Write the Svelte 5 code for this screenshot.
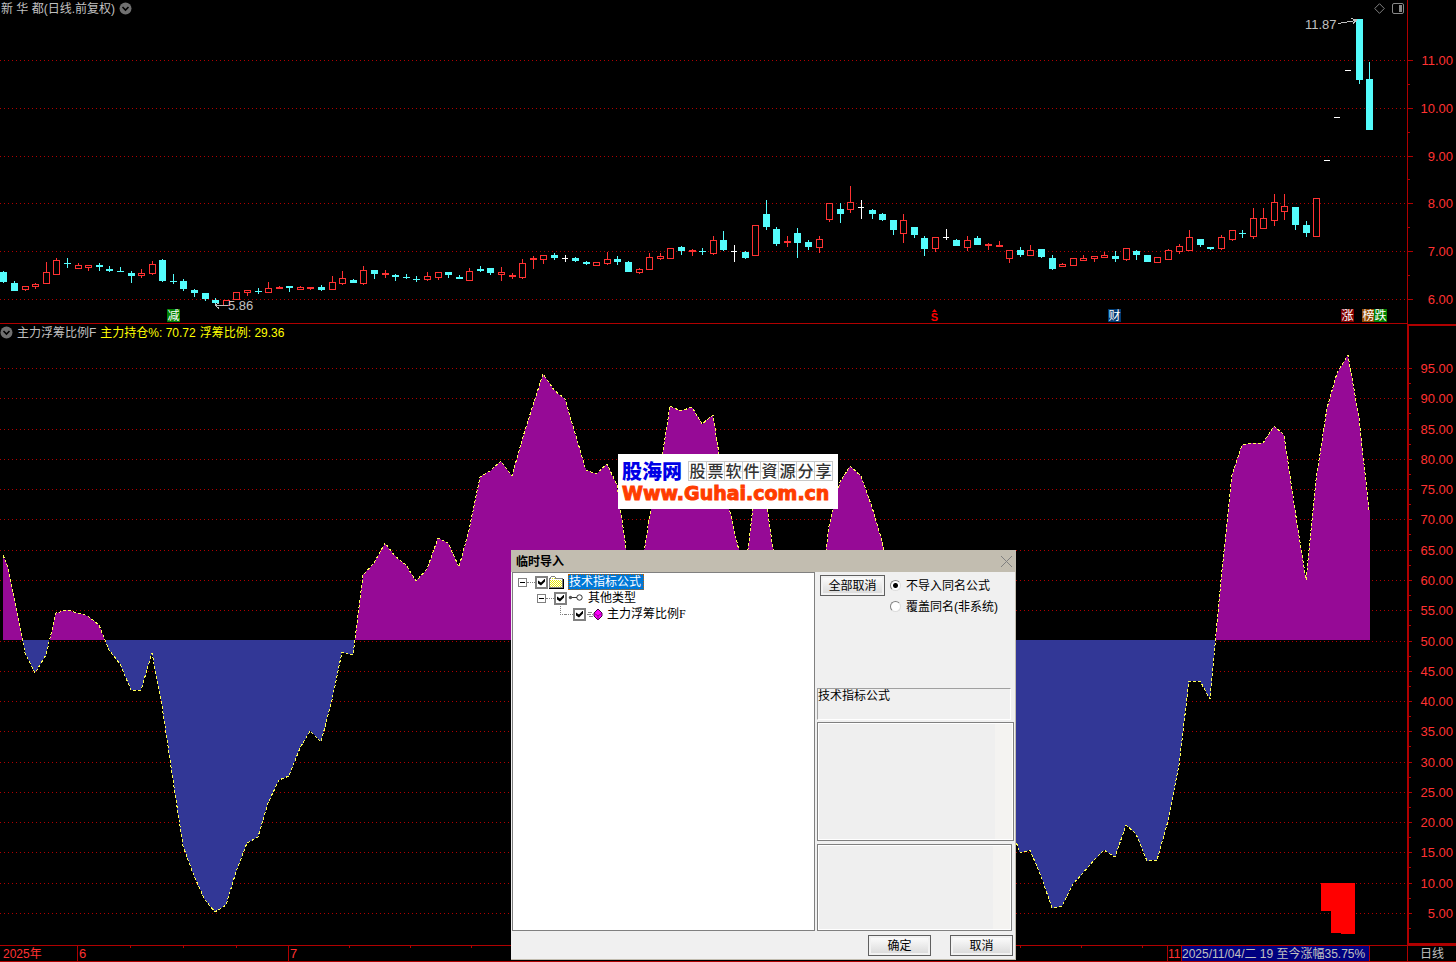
<script>
	// [x, high, top, bottom, low, kind] — u: up, d: down, f: flat
	const candles = [
		[3, 271, 272, 282, 283, 'd'], [14, 281, 283, 291, 291, 'd'], [25, 286, 286, 290, 291, 'u'],
		[35, 283, 284, 287, 289, 'u'], [46, 262, 272, 284, 284, 'u'], [56, 258, 260, 275, 275, 'u'],
		[67, 258, 263, 264, 268, 'd'], [78, 263, 265, 269, 269, 'u'], [88, 265, 265, 268, 271, 'u'],
		[99, 263, 265, 267, 271, 'd'], [109, 266, 269, 271, 272, 'd'], [120, 267, 271, 272, 272, 'd'],
		[131, 271, 273, 276, 283, 'd'], [141, 269, 273, 276, 278, 'u'], [152, 261, 264, 274, 275, 'u'],
		[162, 259, 260, 281, 282, 'd'], [173, 274, 281, 282, 284, 'd'], [183, 279, 281, 289, 291, 'd'],
		[194, 289, 290, 293, 297, 'd'], [205, 293, 293, 299, 301, 'd'], [215, 298, 300, 303, 305, 'd'],
		[226, 300, 300, 306, 306, 'u'], [236, 292, 292, 300, 300, 'u'], [247, 290, 290, 293, 296, 'u'],
		[258, 288, 291, 292, 294, 'd'], [268, 282, 288, 293, 293, 'u'], [279, 286, 287, 289, 289, 'u'],
		[289, 286, 286, 288, 292, 'd'], [300, 286, 287, 290, 290, 'u'], [310, 287, 287, 289, 290, 'u'],
		[321, 285, 287, 290, 291, 'd'], [332, 276, 282, 290, 290, 'u'], [342, 271, 278, 284, 285, 'u'],
		[353, 279, 280, 283, 283, 'd'], [363, 266, 270, 284, 285, 'u'], [374, 270, 270, 274, 279, 'd'],
		[385, 270, 273, 275, 278, 'u'], [395, 274, 275, 277, 281, 'd'], [406, 274, 277, 278, 279, 'd'],
		[416, 276, 279, 280, 282, 'd'], [427, 272, 276, 280, 281, 'u'], [438, 272, 272, 278, 280, 'u'],
		[448, 272, 272, 275, 278, 'd'], [459, 275, 277, 279, 279, 'd'], [469, 268, 271, 281, 281, 'u'],
		[480, 266, 269, 271, 272, 'd'], [490, 268, 268, 273, 275, 'd'], [501, 267, 272, 275, 281, 'u'],
		[512, 273, 275, 277, 279, 'u'], [522, 259, 263, 278, 279, 'u'], [533, 256, 258, 260, 269, 'u'],
		[543, 255, 255, 260, 264, 'u'], [554, 253, 255, 258, 260, 'd'], [565, 255, 258, 259, 262, 'f'],
		[575, 257, 258, 261, 262, 'd'], [586, 261, 262, 264, 265, 'd'], [596, 262, 262, 266, 266, 'u'],
		[607, 252, 259, 264, 265, 'u'], [617, 256, 259, 262, 265, 'd'], [628, 261, 262, 272, 272, 'd'],
		[639, 268, 269, 273, 274, 'u'], [649, 253, 257, 270, 270, 'u'], [660, 253, 256, 259, 260, 'u'],
		[670, 248, 248, 259, 259, 'u'], [681, 246, 247, 251, 255, 'd'], [692, 249, 250, 252, 256, 'u'],
		[702, 248, 251, 252, 255, 'd'], [713, 236, 240, 254, 255, 'u'], [723, 231, 240, 250, 251, 'd'],
		[734, 245, 251, 252, 262, 'f'], [745, 251, 252, 258, 259, 'd'], [755, 225, 225, 256, 256, 'u'],
		[766, 200, 214, 227, 230, 'd'], [776, 227, 229, 244, 246, 'd'], [787, 236, 241, 243, 247, 'u'],
		[797, 228, 233, 243, 258, 'd'], [808, 240, 242, 247, 250, 'd'], [819, 236, 239, 248, 253, 'u'],
		[829, 203, 203, 220, 222, 'u'], [840, 203, 209, 214, 223, 'd'], [850, 186, 202, 210, 213, 'u'],
		[861, 200, 207, 208, 219, 'f'], [872, 209, 210, 214, 219, 'd'], [882, 213, 214, 220, 221, 'd'],
		[893, 220, 220, 230, 235, 'd'], [903, 214, 220, 234, 243, 'u'], [914, 227, 227, 235, 238, 'd'],
		[924, 236, 238, 249, 256, 'd'], [935, 237, 237, 249, 252, 'u'], [946, 229, 237, 238, 240, 'f'],
		[956, 239, 240, 246, 246, 'd'], [967, 236, 240, 248, 251, 'u'], [977, 236, 238, 245, 245, 'd'],
		[988, 243, 244, 246, 250, 'u'], [999, 241, 245, 247, 247, 'u'], [1009, 250, 250, 259, 263, 'u'],
		[1020, 247, 250, 255, 257, 'd'], [1030, 245, 250, 256, 256, 'u'], [1041, 249, 249, 257, 258, 'd'],
		[1052, 255, 258, 269, 270, 'd'], [1062, 263, 264, 267, 267, 'u'], [1073, 258, 258, 266, 266, 'u'],
		[1083, 255, 258, 261, 261, 'u'], [1094, 256, 256, 259, 262, 'u'], [1104, 252, 255, 258, 258, 'u'],
		[1115, 251, 256, 259, 262, 'd'], [1126, 248, 248, 260, 261, 'u'], [1136, 250, 251, 255, 260, 'd'],
		[1147, 255, 255, 262, 262, 'd'], [1157, 257, 257, 263, 263, 'u'], [1168, 249, 250, 260, 260, 'u'],
		[1179, 244, 246, 252, 254, 'u'], [1189, 230, 237, 251, 251, 'u'], [1200, 239, 239, 245, 247, 'd'],
		[1210, 247, 247, 249, 250, 'd'], [1221, 235, 237, 249, 250, 'u'], [1232, 230, 230, 240, 241, 'u'],
		[1242, 230, 233, 234, 238, 'd'], [1253, 208, 218, 237, 239, 'u'], [1263, 208, 218, 229, 229, 'u'],
		[1274, 194, 202, 221, 226, 'u'], [1284, 194, 206, 212, 220, 'u'], [1295, 207, 207, 225, 230, 'd'],
		[1306, 221, 225, 233, 237, 'd'], [1316, 198, 198, 237, 237, 'u'], [1327, 160, 160, 161, 161, 'f'],
		[1337, 117, 117, 118, 118, 'f'], [1348, 70, 70, 71, 71, 'f'], [1359, 19, 19, 80, 84, 'd'],
		[1369, 62, 79, 130, 130, 'd']
	];

	const prices = [
		['11.00', 60], ['10.00', 108], ['9.00', 156], ['8.00', 203], ['7.00', 251], ['6.00', 299]
	];

	const curve = [
		[3, 555], [8, 567], [14, 597], [25, 653], [35, 673], [46, 655], [56, 613], [67, 610], [78, 613], [88, 616],
		[99, 625], [109, 650], [120, 664], [131, 690], [141, 690], [152, 653], [162, 706], [173, 780],
		[183, 846], [194, 876], [205, 900], [215, 912], [226, 905], [236, 872], [247, 843], [258, 837],
		[268, 803], [279, 780], [289, 776], [300, 748], [310, 731], [321, 742], [332, 700], [342, 652],
		[353, 655], [363, 575], [374, 563], [385, 543], [395, 556], [406, 565], [416, 581], [427, 569],
		[438, 538], [448, 543], [459, 567], [469, 530], [480, 477], [490, 471], [501, 461], [512, 476],
		[522, 440], [533, 405], [543, 374], [554, 390], [565, 399], [575, 433], [586, 470], [596, 474],
		[607, 464], [617, 485], [628, 562], [639, 585], [649, 520], [660, 470], [670, 406], [681, 411],
		[692, 407], [702, 424], [713, 415], [723, 480], [734, 530], [745, 575], [755, 490], [766, 500],
		[776, 570], [787, 640], [819, 610], [829, 526], [840, 482], [850, 466], [861, 476], [872, 507],
		[882, 541], [893, 590], [914, 700], [977, 800], [1009, 822], [1020, 853], [1030, 850], [1041, 876],
		[1052, 908], [1062, 906], [1073, 884], [1083, 873], [1094, 860], [1104, 850], [1115, 857],
		[1126, 825], [1136, 834], [1147, 861], [1157, 860], [1168, 821], [1179, 765], [1189, 681],
		[1200, 681], [1210, 699], [1221, 580], [1232, 475], [1242, 445], [1253, 443], [1263, 443],
		[1274, 426], [1284, 435], [1295, 510], [1306, 580], [1316, 480], [1327, 408], [1337, 373],
		[1348, 355], [1359, 418], [1369, 510]
	];
	const points = curve.map((p) => p.join(',')).join(' ');
	const area = `3,640 ${points} 1370,510 1370,640`;

	// 95 down to 5, two levels per 10%
	const levels = Array.from({ length: 19 }, (_, i) => ({
		label: (95 - i * 5).toFixed(2),
		y: Math.round(368 + i * 30.28)
	}));

	const badges = [
		{ text: '减', x: 167, color: '#008000' },
		{ text: '财', x: 1108, color: '#003a72' },
		{ text: '涨', x: 1341, color: '#800000' },
		{ text: '榜', x: 1362, color: '#904800' },
		{ text: '跌', x: 1374, color: '#008000' }
	];

	const pctX = (x) => (x / 1407) * 100;
	const pctPrice = (y) => (y / 324) * 100;
	const pctLevel = (y) => ((y - 324) / 621) * 100;

	let all = $state(true);
	let group = $state(true);
	let formula = $state(true);
	let mode = $state('skip');

	function clearAll() {
		all = group = formula = false;
	}
</script>

{#snippet chevron()}
	<svg class="chevron" viewBox="0 0 13 13" aria-hidden="true">
		<circle cx="6.5" cy="6.5" r="6" fill="#707070" />
		<path d="M3.5 5 6.5 8 9.5 5" fill="none" stroke="#000" stroke-width="1.6" />
	</svg>
{/snippet}

<main class="terminal">
	<section class="pane">
		<svg class="plot" viewBox="0 0 1407 324" preserveAspectRatio="none" aria-hidden="true">
			{#each prices as [label, y] (label)}
				<path class="grid" d="M0 {y + 0.5}H1407" />
			{/each}
			{#each candles as [x, high, top, bottom, low, kind] (x)}
				{#if kind === 'u'}
					<path class="up" d="M{x + 0.5} {high}V{top}M{x + 0.5} {bottom}V{low}" />
					{#if bottom - top < 3}
						<rect x={x - 3} y={top} width="7" height={bottom - top} fill="#ff3232" />
					{:else}
						<rect class="up" x={x - 2.5} y={top + 0.5} width="6" height={bottom - top - 1} />
					{/if}
				{:else}
					<g fill={kind === 'd' ? '#54fcfc' : '#fff'}>
						<rect {x} y={high} width="1" height={low - high} />
						<rect x={x - 3} y={top} width={kind === 'd' ? 7 : 6} height={bottom - top} />
					</g>
				{/if}
			{/each}
			<path class="mark" d="M228 305.5H215M219 308.5 215 305 219 303" />
			<path class="mark" d="M1338 23.5 1356 20.5M1351 18.5 1357 20 1353 23.5" />
		</svg>
		<header class="caption">
			<span>新 华 都(日线.前复权)</span>
			{@render chevron()}
		</header>
		<div class="tools">
			<svg width="11" height="11" viewBox="0 0 11 11" aria-hidden="true">
				<path d="M5.5 .7 10.3 5.5 5.5 10.3 .7 5.5Z" fill="none" stroke="#808080" />
			</svg>
			<svg width="12" height="11" viewBox="0 0 12 11" aria-hidden="true">
				<rect x=".5" y=".5" width="11" height="10" rx="1.5" fill="none" stroke="#888" />
				<rect x="7" y="2" width="3" height="7" fill="#888" />
			</svg>
		</div>
		<span class="peak" style:left="{pctX(1305)}%" style:top="{pctPrice(17)}%">11.87</span>
		<span class="peak" style:left="{pctX(228)}%" style:top="{pctPrice(299)}%">5.86</span>
		{#each badges as b (b.x)}
			<span class="badge" style:left="{pctX(b.x)}%" style:background={b.color}>{b.text}</span>
		{/each}
		<span class="badge split" style:left="{pctX(928)}%">
			<svg width="5" height="3" viewBox="0 0 5 3" aria-hidden="true"><path d="M0 3 2.5 0 5 3Z" fill="#f00" /></svg>
			S
		</span>
	</section>
	<aside class="scale">
		{#each prices as [label, y], i (label)}
			<span class="tick" style:top="{pctPrice(y)}%">{label}</span>
			{#if i > 0}<i class="minor" style:top="{pctPrice(y - 24)}%"></i>{/if}
		{/each}
	</aside>

	<section class="pane lower">
		<svg class="plot" viewBox="0 324 1407 621" preserveAspectRatio="none" aria-hidden="true">
			<clipPath id="above"><rect x="0" y="324" width="1407" height="316" /></clipPath>
			<clipPath id="below"><rect x="0" y="640" width="1407" height="305" /></clipPath>
			{#each levels as l (l.label)}
				<path class="grid" d="M0 {l.y + 0.5}H1407" />
			{/each}
			<polygon points={area} fill="#960a96" clip-path="url(#above)" />
			<polygon points={area} fill="#323796" clip-path="url(#below)" />
			<polyline class="curve" {points} />
			<path d="M1321 883H1355V934H1341V933H1331V911H1321Z" fill="#f00" />
		</svg>
		<header class="caption">
			{@render chevron()}
			<span>主力浮筹比例F</span>
			<span class="value">主力持仓%: 70.72</span>
			<span class="value">浮筹比例: 29.36</span>
		</header>
	</section>
	<aside class="scale framed">
		{#each levels as l (l.label)}
			<span class="tick" style:top="{pctLevel(l.y)}%">{l.label}</span>
			<i class="minor" style:top="{pctLevel(l.y + 15)}%"></i>
		{/each}
	</aside>

	<footer class="timeline">
		<span class="year">2025年</span>
		<span class="month june">6</span>
		<span class="month july">7</span>
		<span class="month last">11</span>
		<span class="date">2025/11/04/二 19 至今涨幅35.75%</span>
		<span></span>
	</footer>
	<div class="period">日线</div>

	<div class="watermark">
		<div class="brand">
			<strong>股海网</strong>
			<span class="slogan">{#each '股票软件資源分享' as c}<b>{c}</b>{/each}</span>
		</div>
		<span class="site">Www.Guhai.com.cn</span>
	</div>

	<div class="dialog" role="dialog" aria-labelledby="dialog-title">
		<div class="titlebar">
			<h2 id="dialog-title">临时导入</h2>
			<button class="close" aria-label="关闭">
				<svg width="11" height="11" viewBox="0 0 11 11"><path d="M0 0 11 11M11 0 0 11" stroke="#808080" /></svg>
			</button>
		</div>
		<div class="body">
			<div class="tree">
				<div class="node">
					<button class="expander" aria-label="折叠"></button>
					<i class="stem"></i>
					<input id="n-all" type="checkbox" bind:checked={all} />
					<svg width="16" height="13" viewBox="0 0 16 13" shape-rendering="crispEdges" aria-hidden="true">
						<path d="M0 11V2H1V1H2V0H6V1H7V2H14V12H0Z" fill="#808080" />
						<path d="M1 3H2V1H6V3H13V11H1Z" fill="#fff" />
						<path d="M1 4.5H13M1 6.5H13M1 8.5H13M1 10.5H13" stroke="#e8e800" stroke-dasharray="1 1" />
						<path d="M2 5.5H13M2 7.5H13M2 9.5H13M3 2.5H6" stroke="#e8e800" stroke-dasharray="1 1" />
						<path d="M0 12.5H15M14.5 3V13" fill="none" stroke="#000" />
					</svg>
					<label class="selected" for="n-all">技术指标公式</label>
				</div>
				<div class="node level2">
					<button class="expander" aria-label="折叠"></button>
					<i class="stem"></i>
					<input id="n-group" type="checkbox" bind:checked={group} />
					<svg width="16" height="13" viewBox="0 0 16 13" aria-hidden="true">
						<g fill="none" stroke="#333"><circle cx="11.500" cy="5.500" r="2.700" /><path d="M3 5.500H9" /></g>
						<circle cx="2.500" cy="5.500" r="1.700" fill="#555" />
					</svg>
					<label for="n-group">其他类型</label>
				</div>
				<div class="node level3">
					<i class="corner"></i>
					<i class="stem"></i>
					<input id="n-formula" type="checkbox" bind:checked={formula} />
					<svg width="16" height="13" viewBox="0 0 16 13" aria-hidden="true">
						<path d="M1 4.5H6M0 6.5H6M2 8.5H7" stroke="#888" stroke-dasharray="4 1" />
						<path d="M11 1 15 5V8L11 12 7 8V5Z" fill="#f0f" stroke="#400040" />
						<path d="M7 5 11 8 15 5M11 8V12" fill="none" stroke="#900090" />
					</svg>
					<label for="n-formula">主力浮筹比例<span class="serif">F</span></label>
				</div>
			</div>
			<div class="side">
				<div class="options">
					<button class="push" onclick={clearAll}>全部取消</button>
					<div class="radios">
						<label><input type="radio" name="mode" value="skip" bind:group={mode} /><span>不导入同名公式</span></label>
						<label><input type="radio" name="mode" value="cover" bind:group={mode} /><span>覆盖同名(非系统)</span></label>
					</div>
				</div>
				<p class="kind">技术指标公式</p>
				<div class="well"></div>
				<div class="well small"></div>
			</div>
		</div>
		<div class="actions">
			<button class="push">确定</button>
			<button class="push">取消</button>
		</div>
	</div>
</main>

<style>
	:global(body) { background: #000; }

	.terminal {
		position: relative;
		display: grid;
		grid-template-columns: 1fr 49px;
		grid-template-rows: 324fr 621fr 17px;
		height: 100vh;
		min-height: 600px;
		overflow: hidden;
		background: #000;
		color: #c0c0c0;
		font: 12px/14px "Liberation Sans", "Noto Sans CJK SC", sans-serif;
	}
	.terminal * { box-sizing: border-box; }
	svg { display: block; flex-shrink: 0; }

	.pane { position: relative; min-width: 0; min-height: 0; border-bottom: 1px solid #b00000; }
	.pane.lower { border-bottom: 0; }
	.plot { position: absolute; top: 0; left: 0; width: 100%; height: 100%; shape-rendering: crispEdges; }
	.pane:first-child .plot { height: calc(100% + 1px); }
	.grid { stroke: #b00000; stroke-dasharray: 1 3; fill: none; }
	.up { stroke: #ff3232; fill: #000; }
	.mark { stroke: #c0c0c0; fill: none; }
	.curve { fill: none; stroke: #ffff54; stroke-dasharray: 3 2; }

	.caption { position: relative; display: flex; align-items: center; gap: 4px; height: 16px; padding-left: 1px; font-size: 12px; }
	.caption span { padding-top: 2px; }
	.lower .caption { gap: 4px; padding-left: 0; }
	.chevron { width: 13px; height: 13px; }
	.value { color: #ffff00; }
	.tools { position: absolute; top: 3px; right: 3px; display: flex; gap: 7px; }
	.peak { position: absolute; font-size: 13px; line-height: 16px; }
	.badge { position: absolute; bottom: 1px; width: 13px; height: 13px; color: #fff; text-align: center; line-height: 14px; }
	.split { display: flex; flex-direction: column; align-items: center; color: #f00; font-size: 11px; font-weight: bold; line-height: 10px; }

	.scale { position: relative; border-left: 1px solid #b00000; color: #ff3232; font-size: 13px; }
	.scale.framed { border: 0; box-shadow: inset 2px 2px #b00000, inset 0 -2px #b00000; }
	.tick { position: absolute; left: 0; right: 3px; line-height: 18px; margin-top: -8px; text-align: right; }
	.tick::before { content: ""; position: absolute; left: 0; top: 8px; width: 5px; height: 1px; background: #b00000; }
	.minor { position: absolute; left: 0; width: 2px; height: 1px; background: #b00000; }
	.framed .minor { width: 4px; }

	.timeline { display: grid; grid-template-columns: 77fr 211fr 879fr 14px 189px 37fr; border-top: 1px solid #b00000; border-bottom: 1px solid #b00000; line-height: 16px; color: #ff3232; white-space: nowrap; overflow: hidden; }
	.year { padding-left: 3px; }
	.month { border-left: 1px solid #b00000; padding-left: 1px; font-size: 13px; }
	.last { padding-left: 0; font-size: 12px; }
	.june { background: repeating-linear-gradient(90deg, transparent 0 52px, #b00000 52px 53px) 0 0 / 100% 2px no-repeat; }
	.july { background: repeating-linear-gradient(90deg, transparent 0 60px, #b00000 60px 61px) 0 0 / 100% 2px no-repeat; }
	.date { background: #000080; color: #c0c0c0; border-left: 1px solid #b00000; border-right: 1px solid #b00000; }
	.period { border: solid #b00000; border-width: 1px 0 1px 1px; padding-left: 12px; line-height: 16px; }

	.watermark { position: absolute; top: 454px; left: 618px; width: 220px; height: 55px; padding: 4px 4px 0; background: #fff; }
	.brand { display: flex; align-items: center; gap: 6px; height: 26px; }
	.brand strong { color: #0000e6; font: 900 20px/24px "Noto Sans CJK SC", sans-serif; }
	.slogan { display: flex; border: 1px solid #c8c8c8; border-width: 1px 0 1px 1px; background: linear-gradient(#ddd, #ddd) 0 9px / 100% 1px no-repeat; }
	.slogan b { width: 18px; height: 18px; border-right: 1px solid #ccc; color: #333; font: 500 16px/17px "Noto Sans CJK SC", sans-serif; text-align: center; }
	.site { display: block; color: #ff3c00; font: bold 19px/19px "DejaVu Sans", sans-serif; -webkit-text-stroke: 1px #ff3c00; white-space: nowrap; }

	.dialog { position: absolute; top: 550px; left: 511px; width: 505px; padding: 0 1px 1px; background: #f0f0f0; border: solid #c2bdb0; border-width: 0 1px 1px 0; color: #000; }
	.dialog, .dialog button { font-family: "Liberation Sans", "Noto Sans CJK SC", sans-serif; font-size: 12px; }
	.titlebar { display: flex; align-items: center; justify-content: space-between; height: 22px; margin: 0 -1px; padding: 0 3px 0 5px; background: #c2bdb0; }
	h2 { margin: 0; padding-top: 2px; font-size: 12px; font-weight: bold; }
	.close { padding: 0; border: 0; background: none; }
	.body { display: flex; gap: 2px; height: 359px; }
	.tree { width: 303px; border: 1px solid #808080; background: #fff; padding: 1px 5px; }
	.node { display: flex; align-items: center; height: 16px; }
	.level2 { padding-left: 19px; }
	.level3 { padding-left: 38px; }
	.expander { width: 9px; height: 9px; padding: 0; border: 1px solid #808080; background: linear-gradient(#000, #000) 50% 50% / 5px 1px no-repeat; }
	.stem { width: 8px; border-top: 1px dotted #808080; }
	.corner { width: 5px; height: 9px; margin: 0 0 8px 4px; border: dotted #808080; border-width: 0 0 1px 1px; }
	.tree label { padding: 1px 2px 0 1px; margin-left: 3px; line-height: 15px; }
	.tree .selected { padding-right: 3px; background: #0078d7; color: #fff; outline: 1px dotted #c06000; outline-offset: -1px; }
	.serif { font-family: "Liberation Serif", serif; }
	input { appearance: none; margin: 0; flex-shrink: 0; background: #fff; }
	input[type="checkbox"] { width: 13px; height: 13px; margin-right: 1px; border: 2px solid #808080; }
	input[type="checkbox"]:checked::before { content: ""; display: block; width: 7px; height: 7px; margin: 1px; background: #000; clip-path: polygon(0 2px, 3px 4px, 7px 0, 7px 3px, 3px 7px, 0 5px); }
	input[type="radio"] { width: 11px; height: 11px; margin-right: 5px; border: 1px solid #808080; border-right-color: #ddd; border-bottom-color: #ddd; border-radius: 50%; }
	input[type="radio"]:checked { background: radial-gradient(circle, #000 0 2px, #fff 3px); }

	.side { flex: 1; display: flex; flex-direction: column; }
	.options { display: flex; gap: 5px; height: 116px; padding: 3px 0 0 3px; }
	.push { height: 21px; width: 63px; padding: 1px 0 0; border: 1px solid #606060; background: linear-gradient(#fff, #d8d8d8); box-shadow: inset 0 0 0 2px #f2f2f2; line-height: 18px; }
	.options .push { width: 65px; }
	.radios { display: flex; flex-direction: column; gap: 1px; }
	.radios label { display: flex; align-items: center; height: 20px; white-space: nowrap; }
	.radios span { padding-top: 2px; }
	.kind { height: 32px; margin: 0 3px 2px 0; border: 1px solid; border-color: #a0a0a0 #fff #fff #a0a0a0; }
	.well { height: 119px; margin-bottom: 3px; border: 1px solid #808080; box-shadow: inset 0 0 0 1px #fff; background: linear-gradient(270deg, #f4f3f1 0 18px, #efefef 18px); }
	.well.small { height: 87px; margin: 0 2px 0 0; }
	.actions { display: flex; justify-content: flex-end; gap: 19px; padding: 4px 1px 2px; }
</style>
